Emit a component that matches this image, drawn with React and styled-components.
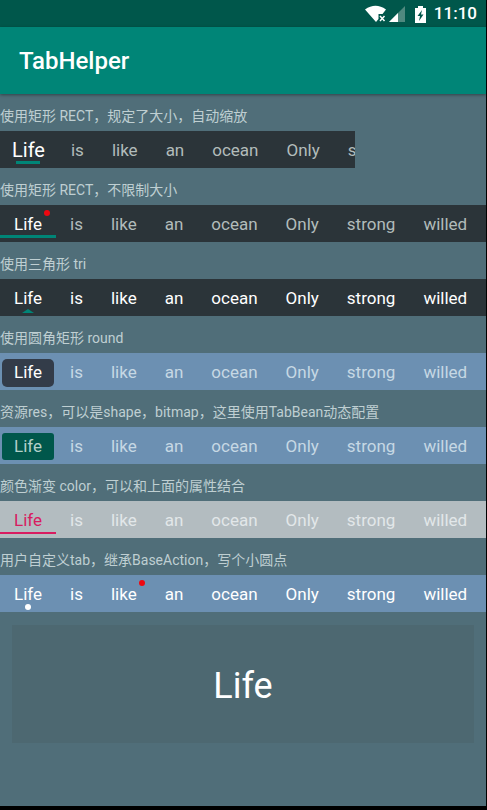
import React, { useState } from "react";
import styled, { createGlobalStyle, css } from "styled-components";

const GlobalStyle = createGlobalStyle`
  *, *::before, *::after { box-sizing: border-box; }
  body {
    margin: 0;
    background: #000;
    font-family: Roboto, "Noto Sans CJK SC", sans-serif;
  }
`;

const Screen = styled.div`
  display: flex;
  flex-direction: column;
  min-height: 100vh;
  border: solid #000;
  border-width: 0 1px 4px 0;
  background: #506e79;
`;

const StatusBar = styled.div`
  display: flex;
  align-items: center;
  justify-content: flex-end;
  height: 27px;
  padding-right: 9px;
  background: #00574b;
  color: #fff;
`;

const StatusIcons = styled.svg`
  width: 64px;
  height: 20px;
  margin-right: 6px;
`;

const Clock = styled.time`
  font-size: 17px;
  font-weight: 500;
  line-height: 27px;
`;

const AppBar = styled.header`
  display: flex;
  align-items: center;
  height: 67px;
  padding: 0 19px;
  background: #008577;
  box-shadow: 0 1px 3px rgba(0, 0, 0, 0.4);
`;

const Title = styled.h1`
  margin: 0;
  color: #fff;
  font-size: 24px;
  font-weight: 500;
  line-height: 32px;
`;

const Content = styled.main`
  display: flex;
  flex-direction: column;
`;

const Caption = styled.h2`
  height: 37px;
  margin: 0;
  padding-top: 6px;
  color: #bfcfd2;
  font-size: 14px;
  font-weight: 400;
  line-height: 32px;
  white-space: nowrap;
  overflow: hidden;
`;

const tones = {
  dark: { bar: "#2b3439", text: "#b2bcbb" },
  darkBright: { bar: "#2b3439", text: "#fff" },
  blue: { bar: "#6c90b2", text: "#c6d8e4" },
  blueBright: { bar: "#6c90b2", text: "#fff" },
  gray: { bar: "#b3bcc0", text: "#e2e7e9" },
};

const TabBar = styled.div`
  display: flex;
  width: ${(p) => (p.$narrow ? "73%" : "100%")};
  height: 37px;
  overflow-x: auto;
  overflow-y: hidden;
  scrollbar-width: none;
  background: ${(p) => tones[p.$tone].bar};
  color: ${(p) => tones[p.$tone].text};
`;

const indicators = {
  shortLine: css`
    padding: 0 12px;
    color: #fff;
    font-size: 20px;
    &::after { bottom: 4px; width: 24px; height: 3px; background: #008577; }
  `,
  line: css`
    color: #fff;
    &::after { bottom: 4px; width: 100%; height: 3px; background: #008577; }
  `,
  triangle: css`
    &::after {
      bottom: 3px;
      width: 12px;
      height: 4px;
      background: #008577;
      clip-path: polygon(50% 0, 100% 100%, 0 100%);
    }
  `,
  round: css`
    color: #fff;
    &::after { inset: 6px 2px 3px; border-radius: 5px; background: #333c49; }
  `,
  resource: css`
    color: #b2d0c9;
    &::after { inset: 6px 2px 4px; border-radius: 3px; background: #00574b; }
  `,
  pinkLine: css`
    color: #d81b60;
    &::after { bottom: 4px; width: 100%; height: 2px; background: #d81b60; }
  `,
  dot: css`
    &::after { bottom: 2px; width: 6px; height: 6px; border-radius: 50%; background: #fff; }
  `,
};

const Tab = styled.button`
  position: relative;
  z-index: 0;
  display: flex;
  flex: none;
  align-items: center;
  justify-content: center;
  height: 37px;
  padding: 1px 14px 0;
  border: 0;
  background: none;
  color: inherit;
  font-family: inherit;
  font-size: 17px;
  line-height: 24px;
  cursor: pointer;

  ${(p) =>
    p.$indicator &&
    css`
      &::after { content: ""; position: absolute; z-index: -1; }
      ${indicators[p.$indicator]}
    `}
`;

const Badge = styled.span`
  position: absolute;
  top: 5px;
  right: 6px;
  width: 6px;
  height: 6px;
  border-radius: 50%;
  background: #ee0710;
`;

const Page = styled.section`
  display: flex;
  align-items: center;
  justify-content: center;
  height: 118px;
  margin: 13px 12px 12px;
  padding-top: 4px;
  background: #4d6871;
  color: #fff;
  font-size: 36px;
  line-height: 44px;
`;

const words = ["Life", "is", "like", "an", "ocean", "Only", "strong", "willed"];

const groups = [
  { caption: "使用矩形 RECT，规定了大小，自动缩放", tone: "dark", indicator: "shortLine", narrow: true },
  { caption: "使用矩形 RECT，不限制大小", tone: "dark", indicator: "line", badge: 0 },
  { caption: "使用三角形 tri", tone: "darkBright", indicator: "triangle" },
  { caption: "使用圆角矩形 round", tone: "blue", indicator: "round" },
  { caption: "资源res，可以是shape，bitmap，这里使用TabBean动态配置", tone: "blue", indicator: "resource" },
  { caption: "颜色渐变 color，可以和上面的属性结合", tone: "gray", indicator: "pinkLine" },
  { caption: "用户自定义tab，继承BaseAction，写个小圆点", tone: "blueBright", indicator: "dot", badge: 2 },
];

export default function App() {
  const [current, setCurrent] = useState(0);
  return (
    <>
      <GlobalStyle />
      <Screen>
        <StatusBar>
          <StatusIcons viewBox="0 0 64 20" aria-hidden="true">
            <path
              d="M1 5.5 Q11.5 -2 22 5.5 L18.5 10 H14.5 V15 L12 18 Z"
              fill="#fff"
            />
            <path d="M16 12 L20.5 17 M20.5 12 L16 17" stroke="#fff" strokeWidth="1.5" />
            <path d="M41 2 V18 H25 Z" fill="#4f897f" />
            <path d="M34 9 V18 H25 Z" fill="#fff" />
            <path d="M54 2 H59 V4 H62 V19 H51 V4 H54 Z" fill="#fff" />
            <path d="M58 6 L53.5 12 H56 L55 17 L59.5 10.5 H57 Z" fill="#00574b" />
          </StatusIcons>
          <Clock>11:10</Clock>
        </StatusBar>
        <AppBar>
          <Title>TabHelper</Title>
        </AppBar>
        <Content>
          {groups.map((group) => (
            <React.Fragment key={group.caption}>
              <Caption>{group.caption}</Caption>
              <TabBar role="tablist" aria-label={group.caption} $tone={group.tone} $narrow={group.narrow}>
                {words.map((word, i) => (
                  <Tab
                    key={word}
                    type="button"
                    role="tab"
                    aria-selected={i === current}
                    $indicator={i === current ? group.indicator : undefined}
                    onClick={() => setCurrent(i)}
                  >
                    {word}
                    {group.badge === i && <Badge />}
                  </Tab>
                ))}
              </TabBar>
            </React.Fragment>
          ))}
          <Page role="tabpanel">{words[current]}</Page>
        </Content>
      </Screen>
    </>
  );
}
